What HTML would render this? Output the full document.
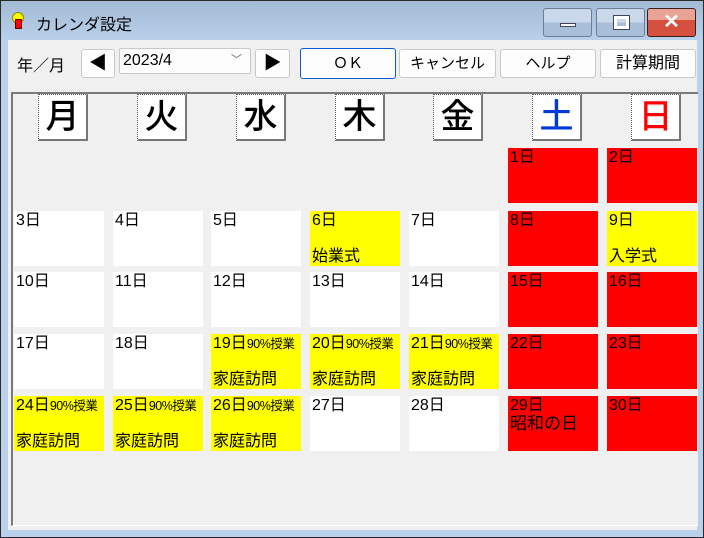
<!DOCTYPE html>
<html><head><meta charset="utf-8"><style>
*{margin:0;padding:0;box-sizing:border-box}
body{width:704px;height:538px;overflow:hidden;background:#b9d1ea;font-family:"Liberation Sans","Noto Sans CJK JP",sans-serif;position:relative}
.win{position:absolute;left:0;top:0;width:704px;height:538px;border:1px solid #2a2a2a;background:linear-gradient(#a3bad5,#b9d1ea 40px)}
.client{position:absolute;left:8px;top:40px;width:689px;height:490px;background:#f0f0f0}
.title{position:absolute;left:36px;top:11px;font-size:16px;color:#000}
.tb{position:absolute;top:8px;height:29px;border:1px solid #6d7c91;border-radius:3px;background:linear-gradient(#c9d8ea 50%,#a9bfd9 50%)}
.btn{position:absolute;top:49px;height:29px;border:1px solid #c8c8c8;border-radius:3px;background:#fdfdfd;font-size:15px;text-align:center;line-height:27px}
.panel{position:absolute;left:11px;top:92px;width:687px;height:434px;border-left:2px solid #7a7a7a;border-top:2px solid #7a7a7a;border-bottom:1px solid #fff;background:#f0f0f0}
.hd{position:absolute;top:94px;width:50px;height:47px;background:#fff;border:1px dotted #555;border-right:2px solid #777;border-bottom:2px solid #777;font-size:34px;text-align:center;line-height:45px;font-weight:500}
.c{position:absolute;width:90px;height:55px;background:#fff;font-size:16px;line-height:18px;padding-left:2px;padding-top:1px;white-space:nowrap;overflow:hidden}
.y{background:#ff0}.r{background:#f00}
.s{font-size:12.5px;letter-spacing:-0.5px;vertical-align:top}
.b{position:absolute;left:2px;bottom:0;font-size:16px;line-height:18px}
</style></head><body>
<div class="win"></div>
<div style="position:absolute;left:12px;top:12px;width:12px;height:12px;border-radius:6px;background:#ff0;border:1px solid #880"></div>
<div style="position:absolute;left:15px;top:19px;width:7px;height:10px;background:#f00;border:1px solid #600"></div>
<div class="title">カレンダ設定</div>
<div class="tb" style="left:543px;width:49px"><div style="position:absolute;left:16px;top:14px;width:16px;height:4px;background:#fff;border:1px solid #445"></div></div>
<div class="tb" style="left:596px;width:49px"><div style="position:absolute;left:17px;top:7px;width:15px;height:13px;border:3px solid #fff;outline:1px solid #445"></div></div>
<div class="tb" style="left:647px;width:49px;background:linear-gradient(#e9a394 40%,#d5503e 40%);border-color:#3a1f1f;color:#fff;font-weight:bold;font-size:20px;text-align:center;line-height:26px">✕</div>
<div class="client"></div>
<div style="position:absolute;left:17px;top:52px;font-size:16px">年／月</div>
<div class="btn" style="left:81px;width:34px;font-size:18px">◀</div>
<div style="position:absolute;left:119px;top:48px;width:132px;height:26px;border:1px solid #c8c8c8;border-radius:2px;background:#fdfdfd;font-size:16px;line-height:24px;padding-left:3px">2023/4<span style="position:absolute;right:8px;top:-1px;font-size:11px;color:#666">﹀</span></div>
<div class="btn" style="left:255px;width:35px;font-size:18px">▶</div>
<div class="btn" style="left:300px;width:96px;border:1px solid #0a5ad8;top:48px;height:31px;line-height:29px">ＯＫ</div>
<div class="btn" style="left:399px;width:97px">キャンセル</div>
<div class="btn" style="left:500px;width:96px">ヘルプ</div>
<div class="btn" style="left:600px;width:96px;font-size:16px">計算期間</div>
<div class="panel"></div>
<div class="hd" style="left:38px">月</div>
<div class="hd" style="left:137px">火</div>
<div class="hd" style="left:236px">水</div>
<div class="hd" style="left:335px">木</div>
<div class="hd" style="left:433px">金</div>
<div class="hd" style="left:532px;color:#0039d8">土</div>
<div class="hd" style="left:631px;color:#f00">日</div>

<div class="c r" style="left:508px;top:148px">1日</div>
<div class="c r" style="left:607px;top:148px">2日</div>

<div class="c" style="left:14px;top:211px">3日</div>
<div class="c" style="left:113px;top:211px">4日</div>
<div class="c" style="left:211px;top:211px">5日</div>
<div class="c y" style="left:310px;top:211px">6日<div class="b">始業式</div></div>
<div class="c" style="left:409px;top:211px">7日</div>
<div class="c r" style="left:508px;top:211px">8日</div>
<div class="c y" style="left:607px;top:211px">9日<div class="b">入学式</div></div>

<div class="c" style="left:14px;top:272px">10日</div>
<div class="c" style="left:113px;top:272px">11日</div>
<div class="c" style="left:211px;top:272px">12日</div>
<div class="c" style="left:310px;top:272px">13日</div>
<div class="c" style="left:409px;top:272px">14日</div>
<div class="c r" style="left:508px;top:272px">15日</div>
<div class="c r" style="left:607px;top:272px">16日</div>

<div class="c" style="left:14px;top:334px">17日</div>
<div class="c" style="left:113px;top:334px">18日</div>
<div class="c y" style="left:211px;top:334px">19日<span class="s">90%授業</span><div class="b">家庭訪問</div></div>
<div class="c y" style="left:310px;top:334px">20日<span class="s">90%授業</span><div class="b">家庭訪問</div></div>
<div class="c y" style="left:409px;top:334px">21日<span class="s">90%授業</span><div class="b">家庭訪問</div></div>
<div class="c r" style="left:508px;top:334px">22日</div>
<div class="c r" style="left:607px;top:334px">23日</div>

<div class="c y" style="left:14px;top:396px">24日<span class="s">90%授業</span><div class="b">家庭訪問</div></div>
<div class="c y" style="left:113px;top:396px">25日<span class="s">90%授業</span><div class="b">家庭訪問</div></div>
<div class="c y" style="left:211px;top:396px">26日<span class="s">90%授業</span><div class="b">家庭訪問</div></div>
<div class="c" style="left:310px;top:396px">27日</div>
<div class="c" style="left:409px;top:396px">28日</div>
<div class="c r" style="left:508px;top:396px">29日<div style="font-size:17px;line-height:18px">昭和の日</div></div>
<div class="c r" style="left:607px;top:396px">30日</div>
</body></html>
